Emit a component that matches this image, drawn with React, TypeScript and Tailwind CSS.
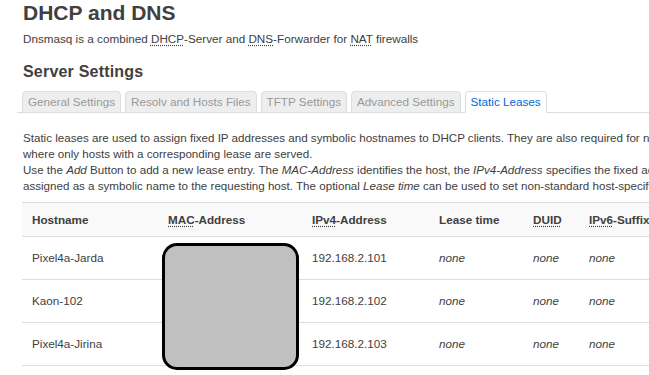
import React from "react";

const Abbr = ({ children }: { children: React.ReactNode }) => (
  <span className="underline decoration-dotted decoration-[#404040] underline-offset-2">{children}</span>
);

const tabs = ["General Settings", "Resolv and Hosts Files", "TFTP Settings", "Advanced Settings"];

const rows = [
  { host: "Pixel4a-Jarda", ip: "192.168.2.101" },
  { host: "Kaon-102", ip: "192.168.2.102" },
  { host: "Pixel4a-Jirina", ip: "192.168.2.103" },
];

export default function App() {
  return (
    <div
      className="relative w-[649px] h-[375px] overflow-hidden bg-white text-[#404040]"
      style={{ fontFamily: '"Liberation Sans", Arial, sans-serif' }}
    >
      <div className="w-[1000px]">
        <h1 className="mt-[1px] pl-[23px] text-[21px] leading-[24px] font-bold">DHCP and DNS</h1>
        <p className="mt-[6px] pl-[23px] text-[11.7px] leading-[16px]">
          Dnsmasq is a combined <Abbr>DHCP</Abbr>-Server and <Abbr>DNS</Abbr>-Forwarder for <Abbr>NAT</Abbr> firewalls
        </p>
        <h2 className="mt-[15px] pl-[23px] text-[16px] leading-[20px] font-bold tracking-[0.2px]">Server Settings</h2>

        <div className="mt-[9px] ml-[17px] flex items-end gap-[4px] border-b border-[#dddddd] pl-[5px]">
          {tabs.map((t) => (
            <div
              key={t}
              className="-mb-px h-[22px] rounded-t-[4px] border border-[#dddddd] bg-[#eeeeee] px-[5px] text-[11.7px] leading-[20px] text-[#999999]"
            >
              {t}
            </div>
          ))}
          <div className="-mb-px h-[22px] rounded-t-[4px] border border-[#dddddd] border-b-white bg-white px-[5px] text-[11.7px] leading-[20px] text-[#0069d6]">
            Static Leases
          </div>
        </div>

        <div className="mt-[17px] pl-[23px] text-[11.6px] leading-[16px] whitespace-nowrap">
          <div>
            Static leases are used to assign fixed IP addresses and symbolic hostnames to DHCP clients. They are also required for non-dynamic interface configurations
          </div>
          <div>where only hosts with a corresponding lease are served.</div>
          <div>
            Use the <em>Add</em> Button to add a new lease entry. The <em>MAC-Address</em> identifies the host, the <em>IPv4-Address</em> specifies the fixed address to use, and the <em>Hostname</em> is
          </div>
          <div>
            assigned as a symbolic name to the requesting host. The optional <em>Lease time</em> can be used to set non-standard host-specific lease time, e.g. 12h, 3d or infinite.
          </div>
        </div>

        <div className="mt-[8px] ml-[22px] text-[11.7px]">
          <div className="flex h-[34px] items-center border-t border-[#dddddd] bg-[#f9f9f9] font-bold">
            <div className="w-[136px] pl-[10px]">Hostname</div>
            <div className="w-[144px] pl-[10px]"><Abbr>MAC</Abbr>-Address</div>
            <div className="w-[127px] pl-[10px]"><Abbr>IPv4</Abbr>-Address</div>
            <div className="w-[94px] pl-[10px]">Lease time</div>
            <div className="w-[56px] pl-[10px]"><Abbr>DUID</Abbr></div>
            <div className="w-[120px] pl-[10px]"><Abbr>IPv6</Abbr>-Suffix (hex)</div>
          </div>
          {rows.map((r, i) => (
            <div
              key={r.host}
              className={
                i === rows.length - 1
                  ? "flex h-[44px] items-center border-t border-b border-[#dddddd]"
                  : "flex h-[43px] items-center border-t border-[#dddddd]"
              }
            >
              <div className="w-[136px] pl-[10px]">{r.host}</div>
              <div className="w-[144px] pl-[10px]"></div>
              <div className="w-[127px] pl-[10px]">{r.ip}</div>
              <div className="w-[94px] pl-[10px] italic">none</div>
              <div className="w-[56px] pl-[10px] italic">none</div>
              <div className="w-[120px] pl-[10px] italic">none</div>
            </div>
          ))}
        </div>
      </div>

      <div className="absolute left-[162px] top-[243px] h-[127px] w-[137px] rounded-[15px] border-[3px] border-black bg-[#c0c0c0]" />
    </div>
  );
}
